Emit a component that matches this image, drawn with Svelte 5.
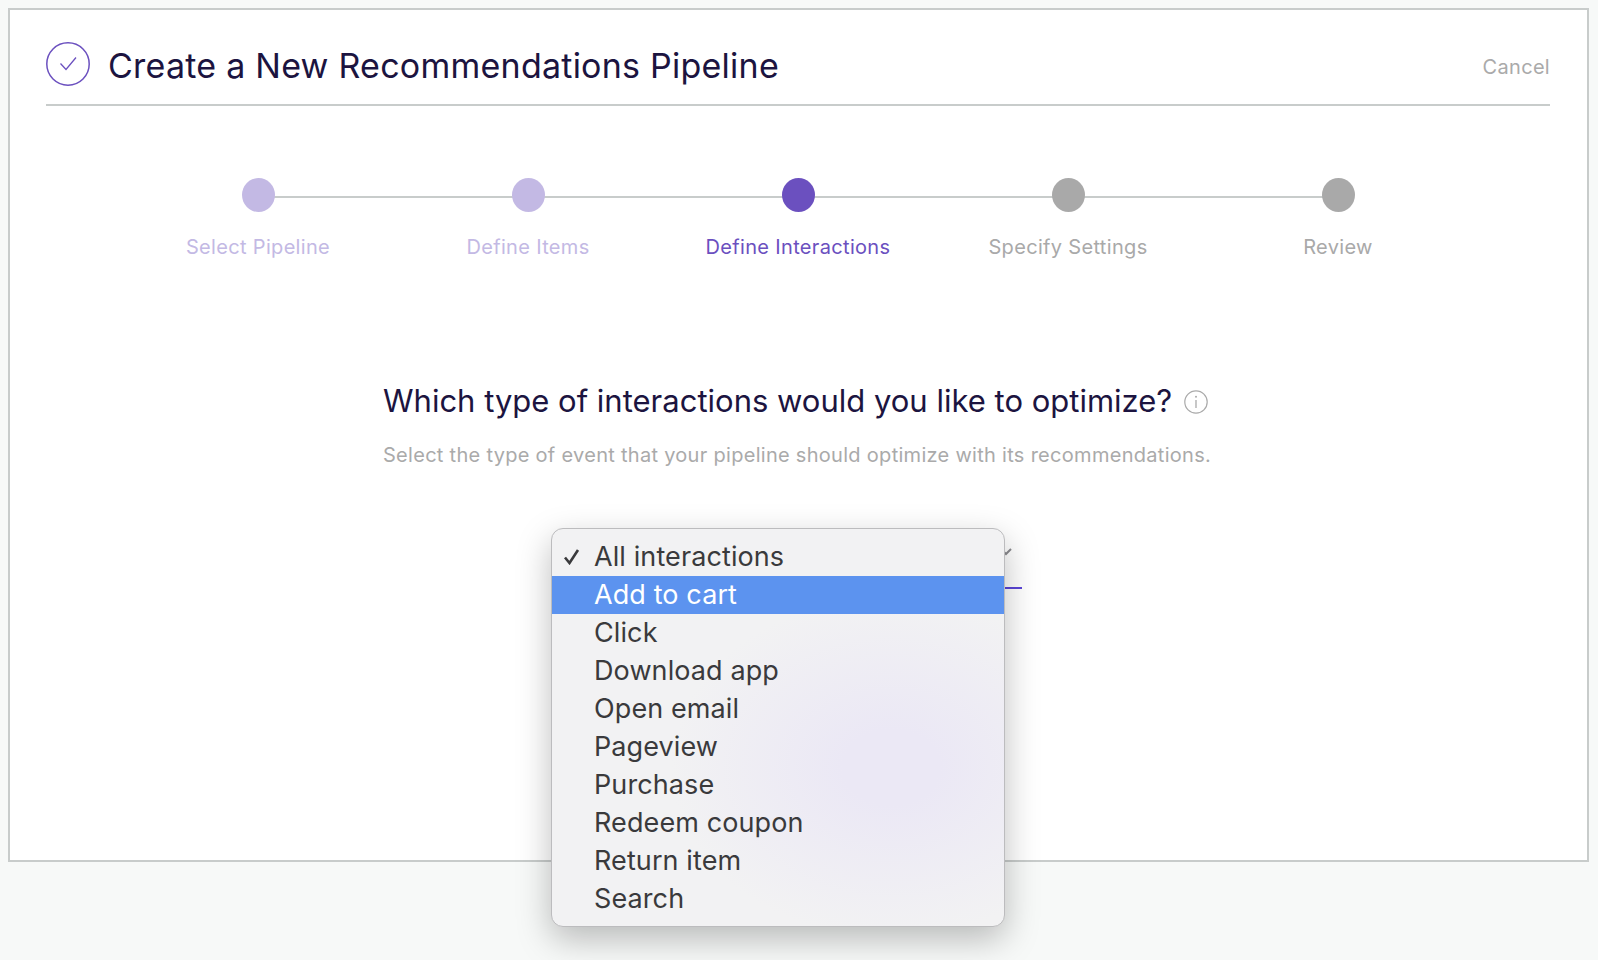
<script>
  const steps = [
    { label: 'Select Pipeline', state: 'done' },
    { label: 'Define Items', state: 'done' },
    { label: 'Define Interactions', state: 'active' },
    { label: 'Specify Settings', state: 'todo' },
    { label: 'Review', state: 'todo' }
  ];
  const options = ['All interactions', 'Add to cart', 'Click', 'Download app', 'Open email', 'Pageview', 'Purchase', 'Redeem coupon', 'Return item', 'Search'];
</script>

<div class="page">
<main class="card">
  <header class="head">
    <svg class="logo" viewBox="0 0 44 44" width="44" height="44" aria-hidden="true">
      <circle cx="22" cy="22" r="21.2" fill="none" stroke="#6b50bf" stroke-width="1.5" />
      <path d="M14.5 21.5 L20 27.5 L30 15.5" fill="none" stroke="#6b50bf" stroke-width="1.3" />
    </svg>
    <h1>Create a New Recommendations Pipeline</h1>
    <span class="cancel">Cancel</span>
  </header>

  <ol class="steps">
    {#each steps as s}
      <li class="step {s.state}">
        <span class="dot"></span>
        <span class="label">{s.label}</span>
      </li>
    {/each}
  </ol>

  <section class="question">
    <div class="q-inner">
      <h2>Which type of interactions would you like to optimize?
        <svg class="info" viewBox="0 0 24 24" width="24" height="24" aria-hidden="true">
          <circle cx="12" cy="12" r="11.2" fill="none" stroke="#aaa" stroke-width="1.2" />
          <circle cx="12" cy="6.8" r="1" fill="#aaa" />
          <path d="M12 10 V18" stroke="#aaa" stroke-width="1.3" />
        </svg>
      </h2>
      <p>Select the type of event that your pipeline should optimize with its recommendations.</p>
    </div>

    <div class="select">
      <svg class="chev" viewBox="0 0 12 8" width="12" height="8" aria-hidden="true">
        <path d="M1 1 L6 6 L11 1" fill="none" stroke="#8a8a8e" stroke-width="2" />
      </svg>
      <ul class="menu">
        {#each options as o, i}
          <li class:hl={i === 1}>
            {#if i === 0}
              <svg class="tick" viewBox="0 0 17 17" width="17" height="17" aria-hidden="true">
                <path d="M2 9.5 L6.5 15 L15 2" fill="none" stroke="#3a3a3c" stroke-width="2.6" />
              </svg>
            {/if}{o}
          </li>
        {/each}
      </ul>
    </div>
  </section>
</main>
</div>

<style>
  :global(body) {
    margin: 0;
    background: #f7f9f8;
  }
  .page {
    height: 960px;
    padding: 8px 9px 0 8px;
    box-sizing: border-box;
    overflow: hidden;
  }
  .card {
    box-sizing: border-box;
    height: 854px;
    padding: 0 37px 0 36px;
    background: #fff;
    border: 2px solid #c8cccb;
    font-family: Inter, "Liberation Sans", sans-serif;
  }
  .head {
    display: flex;
    align-items: center;
    height: 94px;
    border-bottom: 2px solid #c8cccb;
  }
  .logo {
    flex: none;
    margin-top: 14px;
  }
  h1 {
    margin: 16px 0 0 18px;
    flex: 1;
    font-size: 34px;
    font-weight: 400;
    letter-spacing: 0.24px;
    color: #1c1440;
  }
  .cancel {
    margin-top: 20px;
    font-size: 20px;
    letter-spacing: 0.3px;
    color: #aaa;
  }
  .steps {
    display: grid;
    grid-template-columns: repeat(5, 270px);
    justify-content: center;
    margin: 72px 0 0;
    padding: 0;
    list-style: none;
  }
  .step {
    position: relative;
    display: flex;
    flex-direction: column;
    align-items: center;
    gap: 23px;
    font-size: 20px;
    letter-spacing: 0.33px;
  }
  .step:not(:last-child)::after {
    content: '';
    position: absolute;
    left: 50%;
    width: 100%;
    top: 18px;
    height: 2px;
    background: #c8cccb;
  }
  .dot {
    position: relative;
    z-index: 1;
    width: 33px;
    height: 34px;
    border-radius: 50%;
  }
  .done .dot { background: #c3b9e4; }
  .done .label { color: #c3b9e4; }
  .active .dot { background: #6b50bf; }
  .active .label { color: #6b50bf; }
  .todo .dot { background: #a9a9a9; }
  .todo .label { color: #a9a9a9; }

  .question {
    display: flex;
    flex-direction: column;
    align-items: center;
    margin-top: 123px;
  }
  .q-inner {
    width: 830px;
  }
  h2 {
    display: flex;
    align-items: center;
    gap: 12px;
    margin: 0;
    font-size: 31px;
    font-weight: 400;
    white-space: nowrap;
    color: #1c1440;
  }
  .info {
    flex: none;
    margin-top: 2px;
  }
  p {
    margin: 24px 0 0;
    font-size: 20px;
    letter-spacing: 0.29px;
    white-space: nowrap;
    color: #aaa;
  }
  .select {
    position: relative;
    box-sizing: border-box;
    width: 470px;
    height: 51px;
    margin-top: 71px;
    transform: translateX(-11px);
    border-bottom: 2px solid #5b45d8;
  }
  .chev {
    position: absolute;
    right: 10px;
    top: 10px;
  }
  .menu {
    position: absolute;
    left: -1px;
    top: -10px;
    box-sizing: border-box;
    width: 454px;
    height: 399px;
    margin: 0;
    padding: 9px 0;
    list-style: none;
    border-radius: 12px;
    border: 1px solid #bcbcbe;
    background:
      radial-gradient(ellipse 220px 170px at 75% 60%, #ebe8f5 0%, #ebe8f5 22%, rgba(235, 232, 245, 0) 100%),
      #f2f2f3;
    box-shadow: 0 12px 34px rgba(0, 0, 0, 0.26);
    font-size: 27px;
    letter-spacing: 0.1px;
    color: #3a3a3c;
  }
  .menu li {
    position: relative;
    height: 38px;
    line-height: 38px;
    padding-left: 42px;
  }
  .menu li.hl {
    background: #5c93ef;
    color: #fff;
  }
  .tick {
    position: absolute;
    left: 11px;
    top: 10px;
  }
</style>
